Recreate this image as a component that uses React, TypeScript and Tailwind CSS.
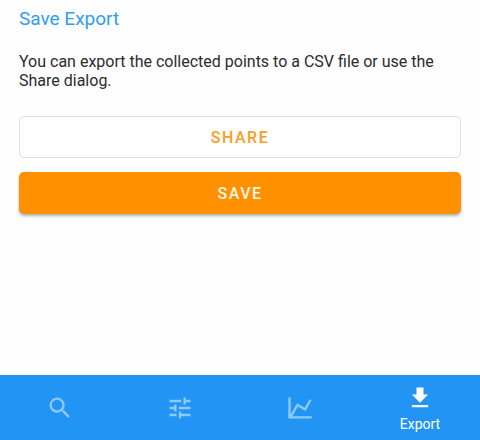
const tabs = [
  {
    name: 'Search',
    path: 'M15.5 14h-.79l-.28-.27A6.471 6.471 0 0 0 16 9.5 6.5 6.5 0 1 0 9.5 16c1.61 0 3.09-.59 4.23-1.57l.27.28v.79l5 4.99L20.49 19l-4.99-5zm-6 0C7.01 14 5 11.99 5 9.5S7.01 5 9.5 5 14 7.01 14 9.5 11.99 14 9.5 14z',
  },
  {
    name: 'Settings',
    path: 'M3 17v2h6v-2H3zM3 5v2h10V5H3zm10 16v-2h8v-2h-8v-2h-2v6h2zM7 9v2H3v2h4v2h2V9H7zm14 4v-2H11v2h10zm-6-4h2V7h4V5h-4V3h-2v6z',
  },
  {
    name: 'Chart',
    path: 'M16 11.78l4.24-7.33 1.73 1-5.23 9.05-6.51-3.75L5.46 19H22v2H2V3h2v14.54L9.5 8z',
  },
  {
    name: 'Export',
    path: 'M5 20h14v-2H5v2zM19 9h-4V3H9v6H5l7 7 7-7z',
    active: true,
  },
];

export default function App() {
  return (
    <div className="flex min-h-screen flex-col bg-[#fefefe] font-['Roboto',sans-serif]">
      <main className="flex flex-1 flex-col px-[19px] pt-2">
        <h1 className="text-[19px] leading-[22px] text-[#2f9df4]">Save Export</h1>
        <p className="mt-[22px] text-base leading-[19px] text-[#2b2b2e]">
          You can export the collected points to a CSV file or use the Share dialog.
        </p>
        <div className="mt-[26px] flex flex-col gap-[14px]">
          <button
            type="button"
            className="h-[42px] rounded-[5px] border border-[#dedde4] bg-white pt-0.5 text-base font-medium tracking-[1.5px] text-[#fb9d20]"
          >
            SHARE
          </button>
          <button
            type="button"
            className="h-[42px] rounded-[5px] bg-[#ff9100] pt-0.5 text-base font-medium tracking-[1.5px] text-[#fff6e6] shadow-[0_2px_3px_rgba(0,0,0,0.3)]"
          >
            SAVE
          </button>
        </div>
      </main>
      <nav className="grid h-[65px] grid-cols-4 bg-[#2294f4]">
        {tabs.map((tab) => (
          <button
            key={tab.name}
            type="button"
            aria-label={tab.name}
            aria-current={tab.active ? 'page' : undefined}
            className={
              tab.active
                ? 'flex flex-col items-center justify-center pt-1 text-white'
                : 'flex flex-col items-center justify-center text-[#90caf9]'
            }
          >
            <svg viewBox="0 0 24 24" className="size-7" fill="currentColor" aria-hidden="true">
              <path d={tab.path} />
            </svg>
            {tab.active && <span className="text-sm leading-6">{tab.name}</span>}
          </button>
        ))}
      </nav>
    </div>
  );
}
